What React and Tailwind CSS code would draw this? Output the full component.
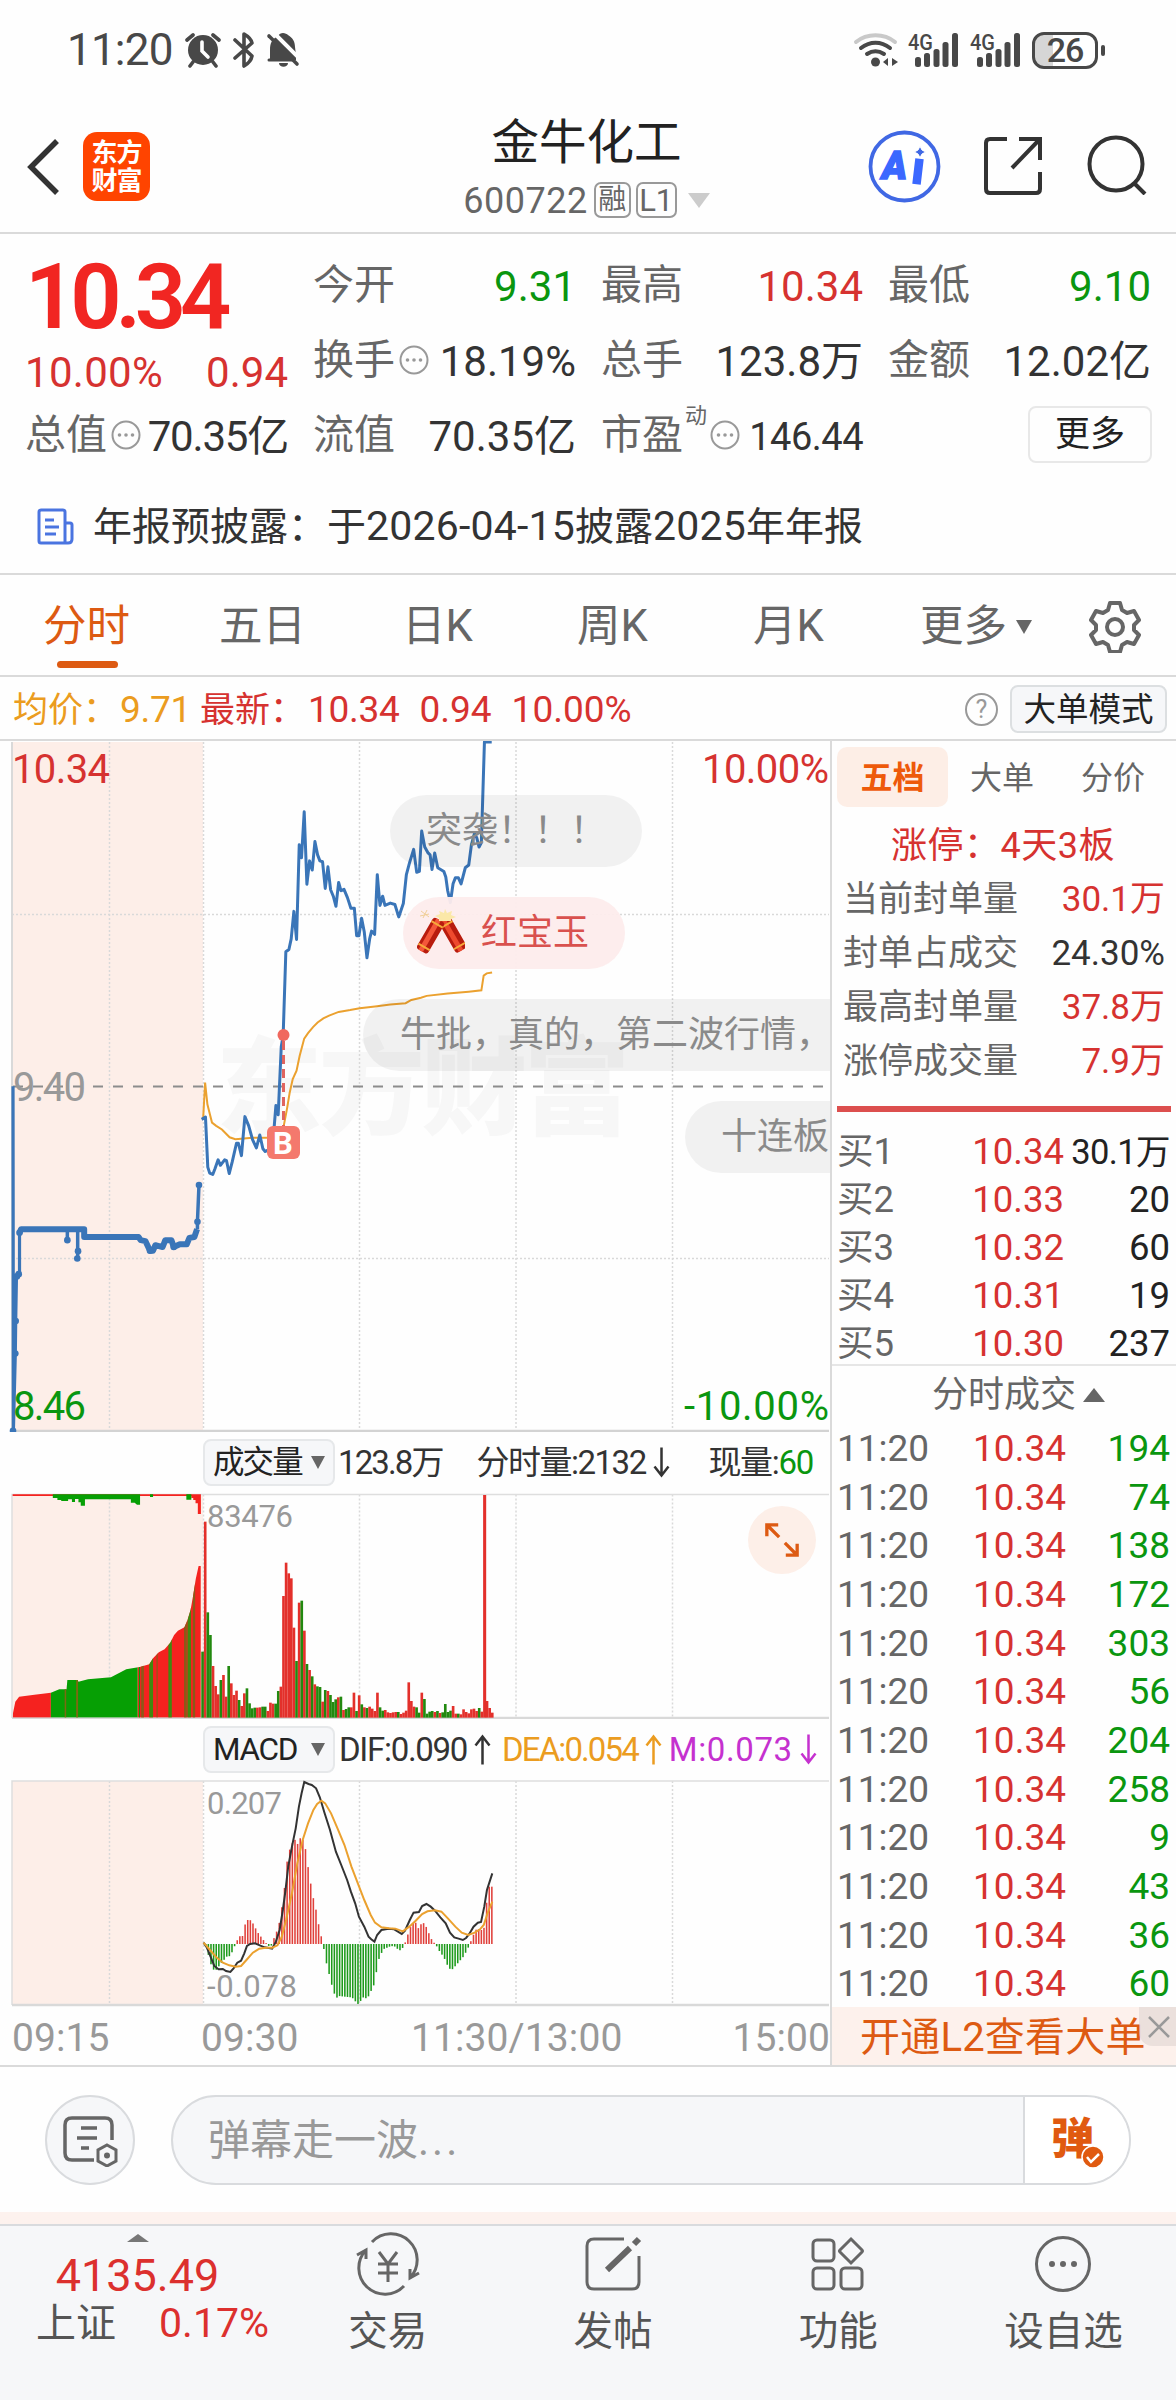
import clsx from "clsx";

const RED = "#f5221f";
const GREEN = "#069f04";

const priceLine =
    "527,848 537,843 543,952 548,965 556,968 562,955 570,936 576,948 587,936 592,938 599,966 607,940 618,900 623,900 631,927 640,842 650,862 660,892 670,910 679,882 687,912 693,918 700,915 709,925 715,880 721,818 727,838 735,690 740,665 747,483 755,478 761,455 768,395 775,456 782,250 788,278 795,178 802,336 809,285 816,305 823,243 830,272 836,285 843,287 850,345 857,298 864,348 871,362 878,384 885,332 891,350 899,347 908,365 917,388 926,388 932,448 938,448 945,410 952,440 959,496 966,455 971,438 979,445 986,315 993,382 1000,362 1006,382 1020,377 1032,380 1042,407 1054,378 1062,315 1070,290 1081,260 1089,310 1096,308 1102,220 1110,255 1118,267 1124,272 1129,304 1136,268 1144,300 1160,308 1165,320 1170,350 1177,376 1184,335 1190,322 1198,322 1205,335 1216,300 1225,294 1232,250 1240,225 1246,235 1252,255 1258,245 1266,26 1285,26";
const avgLine =
    "531,845 536,768 542,815 548,835 554,855 565,862 580,870 600,887 615,891 660,888 710,888 735,890 742,860 750,825 757,790 765,760 775,742 783,710 795,672 805,660 818,647 830,637 845,628 860,622 885,614 915,610 940,606 980,602 1020,598 1060,595 1075,588 1100,583 1115,579 1170,574 1225,570 1258,567 1264,535 1272,530 1286,528";
const auctionRise = "34,776 35,1526 40,1358 41,1287 43,1190 51,1185 51,1095";
const auctionLine =
    "51,1095 55,1087 220,1087 220,1104 362,1104 368,1111 380,1113 392,1134 400,1134 406,1122 425,1126 432,1111 448,1111 454,1126 470,1120 488,1120 495,1106 508,1104 515,1087";
const auctionDots = [
    [34, 1526], [40, 1358], [41, 1287], [44, 1190], [49, 1185], [51, 1095],
    [176, 1111], [204, 1135], [202, 1151], [392, 1134], [454, 1126], [516, 1071], [520, 991],
];

// one bar per minute from 09:30: top of the bar and its direction
const volume =
    "695g 305r 577g 645g 738r 798r 823r 780g 765r 830r 738g 790r 825r 812r 840g 858r 820r 805g 850g 865g 863g 863r 862r 860g 860g 873r 848r 851r 851g 813g 800r 528r 428r 460r 475r 623r 723g 548r 542g 632r 732g 750r 769g 793r 799g 801g 845r 810g 813r 825g 846g 838g 832r 830g 870r 867g 862g 862r 818r 873g 826r 853g 862r 864g 860r 866r 873r 818r 862g 872g 870r 877r 879r 877r 876r 876g 882r 878r 872r 787r 843r 860r 862g 878g 818r 837g 881g 875g 873g 876r 873g 879r 877g 852g 876g 872g 858r 881r 881g 883r 868r 876r 880r 868r 866r 873r 864g 875r 225r 843r 864r 878r"
        .split(" ")
        .map((v, i) => ({ x: 529 + i * 6.82, y: parseInt(v), up: v.endsWith("r") }));

const auctionVolume =
    "33,893 33,885 40,845 50,830 90,824 133,818 155,808 174,808 176,780 203,780 205,785 230,778 290,772 315,757 330,748 365,741 390,733 400,715 415,697 430,688 445,668 455,645 465,632 482,622 490,600 498,570 505,525 512,475 519,438 525,438 525,893";
const auctionColors = [
    [33, 133, RED], [133, 360, GREEN], [169, 173, "#7b6a12"], [199, 204, "#7b6a12"], [360, 525, RED],
    [363, 366, GREEN], [369, 376, "#8b5a18"], [390, 400, "#3f8a10"], [409, 412, "#8b5a18"], [440, 449, "#3f8a10"],
    [481, 488, "#8b5a18"], [490, 499, "#3f8a10"], [504, 510, "#8b5a18"],
];

const macdKeys = [
    [384, 710], [390, 740], [395, 770], [400, 782], [405, 778], [410, 765], [417, 752], [423, 740], [430, 738],
    [437, 712], [443, 690], [448, 678], [453, 678], [457, 645], [462, 630], [467, 630], [473, 642], [478, 658],
    [483, 672], [488, 682], [494, 695], [499, 703], [505, 714], [510, 690], [515, 670], [520, 650], [525, 603],
    [530, 552], [535, 462], [540, 422], [545, 402], [550, 385], [554, 415], [558, 380], [563, 390], [568, 390],
    [573, 452], [578, 498], [583, 555], [588, 580], [592, 622], [598, 668], [603, 702], [608, 752], [612, 775],
    [617, 812], [622, 840], [627, 866], [632, 858], [655, 862], [660, 866], [665, 878], [670, 884], [675, 866],
    [680, 860], [685, 868], [690, 852], [695, 835], [700, 818], [705, 755], [710, 738], [715, 718], [730, 708],
    [738, 710], [745, 722], [750, 718], [755, 704], [760, 680], [765, 655], [770, 640], [775, 635], [782, 658],
    [787, 638], [792, 640], [797, 655], [803, 680], [808, 695], [813, 702], [818, 718], [823, 730], [828, 740],
    [835, 765], [842, 782], [850, 768], [857, 755], [865, 740], [872, 720], [877, 702], [882, 680], [890, 655],
    [897, 660], [903, 660], [907, 595], [912, 530], [920, 530],
];
const macdBars = Array.from({ length: 110 }, (_, i) => {
    const x = 384 + i * 4.9;
    const k = Math.max(1, macdKeys.findIndex((p) => p[0] >= x));
    const [x0, y0] = macdKeys[k - 1];
    const [x1, y1] = macdKeys[k];
    return { x, y: y0 + ((y1 - y0) * (x - x0)) / (x1 - x0) };
});
const difLine =
    "380,698 386,712 393,740 400,768 408,778 416,777 422,783 430,786 436,775 443,758 450,752 456,730 461,708 467,702 476,700 485,706 494,712 502,714 508,716 515,695 522,660 528,600 533,540 538,470 545,410 552,355 558,290 563,250 568,216 576,222 582,225 590,235 597,262 606,310 616,360 627,425 637,465 648,510 655,545 663,580 670,620 680,650 688,680 693,688 699,695 704,675 712,660 725,656 736,658 750,672 756,662 765,630 772,608 782,606 788,588 796,582 804,590 812,602 822,622 832,640 840,668 848,682 856,686 864,690 870,684 876,672 884,650 892,638 898,636 904,590 909,540 919,490";
const deaLine =
    "380,698 392,720 404,742 416,758 428,766 440,770 450,768 460,750 472,728 484,716 496,713 508,713 518,706 526,680 534,630 545,550 555,460 565,390 575,340 585,300 592,282 600,272 607,280 618,310 630,355 643,405 656,470 668,520 680,570 692,615 700,638 712,652 726,655 738,656 752,664 764,650 776,632 788,612 798,604 812,601 824,605 836,625 850,650 862,668 874,675 886,668 896,658 903,645 910,610 919,575";

const limitStats = [
    ["当前封单量", "30.1万", true],
    ["封单占成交", "24.30%", false],
    ["最高封单量", "37.8万", true],
    ["涨停成交量", "7.9万", true],
];
const bids = [
    ["买1", "10.34", "30.1万"],
    ["买2", "10.33", "20"],
    ["买3", "10.32", "60"],
    ["买4", "10.31", "19"],
    ["买5", "10.30", "237"],
];
const trades = [194, 74, 138, 172, 303, 56, 204, 258, 9, 43, 36, 60];

function Signal() {
    return (
        <svg className="h-[36px] w-[52px] overflow-visible" viewBox="0 0 52 36" fill="#484848">
            <text x="0" y="18" fontSize="22" fontWeight="500" textLength="25" lengthAdjust="spacingAndGlyphs">4G</text>
            <rect x="7" y="25" width="6" height="10" rx="2.5" />
            <rect x="16" y="21" width="6" height="14" rx="2.5" />
            <rect x="25.500" y="17" width="6" height="18" rx="2.5" />
            <rect x="34.500" y="10" width="6" height="25" rx="2.5" />
            <rect x="44" y="1" width="6" height="34" rx="2.5" />
        </svg>
    );
}

function StatusBar() {
    return (
        <div className="flex h-[100px] items-center pl-[67px] pr-[71px] text-[#484848]">
            <span className="text-[44px] leading-none tracking-[-0.8px]">11:20</span>
            <svg className="ml-[12px] h-[36px] w-[36px]" viewBox="0 0 36 36" fill="none">
                <circle cx="18" cy="18" r="15" fill="#484848" />
                <path d="M2 8 8 3M34 8 28 3M8 30l-3 4M28 30l3 4" stroke="#484848" strokeWidth="3.6" strokeLinecap="round" />
                <path d="M17 10v9l6 6" stroke="#fff" strokeWidth="3.6" strokeLinecap="round" />
            </svg>
            <svg className="ml-[11px] h-[36px] w-[24px]" viewBox="0 0 24 36" fill="none" stroke="#484848" strokeWidth="3.600" strokeLinecap="round" strokeLinejoin="round">
                <path d="M3 8 20 24q-1 6-8 10V2q7 4 8 9L3 26" />
            </svg>
            <svg className="ml-[10px] h-[36px] w-[34px]" viewBox="0 0 34 36">
                <path d="M17 1c2 0 4 1 5 2 5 3 7 7 7 12l1 8v5H4V18c0-7 2-11 8-14 1-2 3-3 5-3ZM13 31h9c0 5-9 5-9 0Z" fill="#484848" />
                <path d="M6-1 36 29" stroke="#fff" strokeWidth="4" />
                <path d="M3 4 31 32" stroke="#484848" strokeWidth="3.600" strokeLinecap="round" />
                <path d="M3 28h23" stroke="#484848" strokeWidth="3" strokeLinecap="round" />
            </svg>
            <div className="ml-auto flex items-center">
                <svg className="h-[36px] w-[46px]" viewBox="0 0 46 36" fill="none" strokeLinecap="round">
                    <path d="M3 10c11-9 28-9 39 0" stroke="#c9c9c9" strokeWidth="4" />
                    <path d="M8 16c9-7 20-7 29 0" stroke="#484848" strokeWidth="4" />
                    <path d="M14 22c6-4 11-4 17 0" stroke="#484848" strokeWidth="4" />
                    <circle cx="22.500" cy="30" r="4.500" fill="#484848" />
                    <path d="M35 26v8l-5-4ZM39 26v8l6-4Z" fill="#484848" />
                </svg>
                <div className="ml-[9px] flex gap-[10px]">
                    <Signal />
                    <Signal />
                </div>
                <div className="ml-[10px] flex h-[37px] w-[66px] items-center justify-center rounded-[12px] border-[3px] border-[#484848] bg-linear-to-r from-[#d6d6d6] from-[30%] to-white to-[30%]">
                    <span className="text-[34px] font-medium leading-none tracking-[-1px]">26</span>
                </div>
                <div className="ml-[3px] h-[11px] w-[4px] rounded bg-[#484848]" />
            </div>
        </div>
    );
}

function Header() {
    return (
        <header className="flex h-[134px] justify-between border-b-2 border-[#dadada]">
            <div className="flex w-[380px] items-start pl-[25px] pt-[32px]">
                <svg className="mt-[7px] h-[56px] w-[34px]" viewBox="0 0 34 56" fill="none" stroke="#333" strokeWidth="5.500">
                    <path d="M32 2 6 28l26 26" />
                </svg>
                <div className="ml-[24px] flex h-[69px] w-[67px] flex-col items-center justify-center rounded-[14px] bg-[#ff4400] text-[26px] font-bold leading-[28px] tracking-[-1px] text-white">
                    <span>东方</span>
                    <span>财富</span>
                </div>
            </div>
            <div className="-ml-[3px] flex flex-col items-center pt-[17px]">
                <h1 className="text-[47.500px] leading-[52px] text-[#222]">金牛化工</h1>
                <div className="mt-[12px] flex h-[38px] items-center text-[#666]">
                    <span className="mt-[2px] text-[36px] leading-none tracking-[0.500px]">600722</span>
                    <span className="ml-[6px] flex h-[36px] w-[37px] items-center justify-center rounded-[7px] border-2 border-[#999] text-[28px] leading-none">融</span>
                    <span className="ml-[5px] flex h-[36px] w-[41px] items-center justify-center rounded-[7px] border-2 border-[#999] text-[31px] leading-none">L1</span>
                    <svg className="ml-[11px] h-[15px] w-[22px]" viewBox="0 0 22 15" fill="#ccc">
                        <path d="M0 0h22L11 15Z" />
                    </svg>
                </div>
            </div>
            <div className="flex w-[380px] justify-end pr-[29px] pt-[30px]">
                <svg className="h-[73px] w-[73px]" viewBox="0 0 73 73">
                    <circle cx="36.500" cy="36.500" r="34" fill="#fff" stroke="#4068e4" strokeWidth="3.800" />
                    <g fontStyle="italic">
                        <text x="14" y="49" fontSize="38" fontWeight="900" fill="#3b68ff" stroke="#3b68ff" strokeWidth="1.500">A</text>
                    </g>
                    <path d="m51 33-2 17" stroke="#3b68ff" strokeWidth="8.500" strokeLinecap="square" />
                    <path d="M52 16q1 5 6 6-5 1-6 6-1-5-6-6 5-1 6-6Z" fill="#4068e4" stroke="#fff" strokeWidth="1" />
                </svg>
                <svg className="ml-[42px] mt-[6px] h-[60px] w-[60px]" viewBox="0 0 60 60" fill="none" stroke="#333" strokeWidth="4">
                    <path d="M24 3H7q-4 0-4 4v46q0 4 4 4h46q4 0 4-4V36M36 3h21v21M56 4 29 32" />
                </svg>
                <svg className="ml-[44px] mt-[5px] h-[60px] w-[60px]" viewBox="0 0 60 60" fill="none" stroke="#333" strokeWidth="4">
                    <circle cx="29" cy="29" r="26.500" />
                    <path d="m47 48 11 11" />
                </svg>
            </div>
        </header>
    );
}

function Info() {
    return (
        <svg className="ml-[4px] h-[30px] w-[30px] shrink-0" viewBox="0 0 30 30" fill="#999">
            <circle cx="15" cy="15" r="13.500" fill="none" stroke="#999" strokeWidth="2" />
            <circle cx="8.500" cy="15" r="1.800" />
            <circle cx="15" cy="15" r="1.800" />
            <circle cx="21.500" cy="15" r="1.800" />
        </svg>
    );
}

function Stat({ label, value, info, sup, className = "text-[#333]", size = "text-[42px]" }) {
    return (
        <div className="flex h-[75px] items-center justify-between whitespace-nowrap pt-[1px] leading-none">
            <span className="flex items-center text-[41px] text-[#666]">
                {label}
                {sup && <sup className="-mr-[1px] ml-[2px] self-start text-[22px] leading-[18px] top-[-8px]">{sup}</sup>}
                {info && <Info />}
            </span>
            <span className={clsx("mt-[3px]", size, className)}>{value}</span>
        </div>
    );
}

function Quote() {
    return (
        <section className="grid grid-cols-[263px_263px_262px_263px] gap-x-[25px] pl-[25px] pt-[13px]">
            <div>
                <div className="flex h-[91px] items-center pt-[11px] text-[90px] font-semibold leading-none tracking-[-6.200px] text-[#f12622]">10.34</div>
                <div className="flex h-[59px] items-center justify-between pt-[10px] text-[42px] leading-none text-[#d63230]">
                    <span className="tracking-[0.300px]">10.00%</span>
                    <span>0.94</span>
                </div>
                <Stat label="总值" info value="70.35亿" size="text-[42px] tracking-[-1.200px]" />
            </div>
            <div>
                <Stat label="今开" value="9.31" className="text-[#0a960f]" />
                <Stat label="换手" info value="18.19%" />
                <Stat label="流值" value="70.35亿" />
            </div>
            <div>
                <Stat label="最高" value="10.34" className="text-[#d63230]" />
                <Stat label="总手" value="123.8万" />
                <Stat label="市盈" sup="动" info value="146.44" size="text-[38px] tracking-[-0.500px]" />
            </div>
            <div>
                <Stat label="最低" value="9.10" className="text-[#0a960f]" />
                <Stat label="金额" value="12.02亿" />
                <div className="-mr-[1px] flex h-[75px] items-center justify-end">
                    <button className="h-[57px] w-[124px] rounded-[8px] border-2 border-[#e8e8e8] text-[35px] leading-none text-[#222]">更多</button>
                </div>
            </div>
        </section>
    );
}

function Notice() {
    return (
        <div className="flex h-[103px] items-center border-b-2 border-[#dadada] pl-[37px] pt-[8px]">
            <svg className="h-[37px] w-[37px]" viewBox="0 0 37 37" fill="none" stroke="#4a74e0" strokeWidth="3">
                <path d="M28 35H4q-2 0-2-2V4q0-2 2-2h22q2 0 2 2Zm0-20h5q2 0 2 2v14q0 4-4 4h-3" />
                <path d="M8 12h9M8 19h14M8 26h11" />
            </svg>
            <span className="ml-[19px] text-[39px] leading-none text-[#333]">
                年报预披露：于<span className="text-[41px] tracking-[0.200px]">2026-04-15</span>披露<span className="text-[41px] tracking-[0.200px]">2025</span>年年报
            </span>
        </div>
    );
}

function Tabs() {
    return (
        <nav className="flex h-[102px] items-center border-b-2 border-[#dadada] pl-[43px] pt-[3px] text-[43.500px] leading-none text-[#666]">
            <div className="relative w-[176px] text-[#dd5a12]">
                分时
                <span className="absolute -bottom-[20px] left-[14px] h-[7px] w-[61px] rounded-full bg-[#dd5a12]" />
            </div>
            <div className="w-[183px]">五日</div>
            <div className="w-[175px]">日K</div>
            <div className="w-[176px]">周K</div>
            <div className="w-[167px]">月K</div>
            <div className="flex items-center">
                更多
                <svg className="ml-[9px] h-[14px] w-[16px]" viewBox="0 0 16 14" fill="#666">
                    <path d="M0 0h16L8 14Z" />
                </svg>
            </div>
            <svg className="ml-[57px] h-[52px] w-[52px]" viewBox="0 0 52 52" fill="none" stroke="#666" strokeWidth="4" strokeLinejoin="round">
                <path d="M21 2h10l2 7 5 3 7-2 5 9-5 5v5l5 5-5 9-7-2-5 3-2 7H21l-2-7-5-3-7 2-5-9 5-5v-5l-5-5 5-9 7 2 5-3Z" />
                <circle cx="26" cy="26" r="8" />
            </svg>
        </nav>
    );
}

function PriceBar() {
    return (
        <div className="flex h-[64px] items-center whitespace-nowrap border-b-2 border-[#dadada] pl-[13px] pr-[9px] pt-[2px] text-[35px] leading-none text-[#d63230]">
            <span className="w-[187px] text-[#eb9c20]">均价：<span className="ml-[2px] text-[37px] tracking-[-0.300px]">9.71</span></span>
            <span>最新：<span className="ml-[3px] text-[37px] tracking-[-0.300px]">10.34</span></span>
            <span className="ml-[20px] text-[37px]">0.94</span>
            <span className="ml-[20px] text-[37px]">10.00%</span>
            <span className="ml-auto flex h-[33px] w-[33px] items-center justify-center rounded-full border-2 border-[#999] text-[25px] text-[#999]">?</span>
            <span className="ml-[12px] flex h-[48px] w-[157px] items-center justify-center rounded-[8px] border-2 border-[#dcdfe1] bg-[#f6f7f9] pt-[2px] text-[32.500px] text-[#222]">大单模式</span>
        </div>
    );
}

function Pill({ children, className }) {
    return (
        <div className={clsx("absolute flex h-[72px] items-center whitespace-nowrap text-[36px] leading-none", className)}>
            {children}
        </div>
    );
}

function Firecracker() {
    return (
        <svg className="h-[50px] w-[48px]" viewBox="0 0 48 50">
            <g transform="rotate(-30 28 14)">
                <rect x="22" y="12" width="13" height="35" rx="3" fill="#b81c0e" />
                <rect x="25" y="12" width="5" height="35" fill="#ee4a2e" />
                <path d="M22 17h13M22 42h13" stroke="#f6a93a" strokeWidth="2" />
            </g>
            <g transform="rotate(30 22 14)">
                <rect x="15" y="12" width="13" height="36" rx="3" fill="#b81c0e" />
                <rect x="18" y="12" width="5" height="36" fill="#f4573a" />
                <path d="M15 17h13M15 43h13" stroke="#f6a93a" strokeWidth="2" />
            </g>
            <path d="m28 1 2 4 5-2-1 4 5 2-5 2 0 2-12 0 0-3-4-2 5-2-1-3 5 2Z" fill="#fbe8a8" />
            <path d="m4 3 8 6M10 2 6 10M3 8l9-2" stroke="#f0cf98" strokeWidth="1" />
        </svg>
    );
}

function PriceChart() {
    return (
        <div className="relative h-[691px] overflow-hidden">
            <svg className="h-[691px] w-[830px]" viewBox="0 741 830 691">
                <rect x="12" y="742" width="191" height="689" fill="#fdeee8" />
                <text x="216" y="1126" fontSize="106" fontWeight="900" fill="#f7f7f7" textLength="414">东方财富</text>
                <g stroke="#d9d9d9" strokeWidth="1.500" strokeDasharray="2 2">
                    <path d="M109.500 742v689M203.500 742v689M359.500 742v689M516 742v689M672.500 742v689M12 914.500h817M12 1258.500h817" />
                </g>
                <path d="M12 742v689" stroke="#d9d9d9" strokeWidth="2" />
                <path d="M12 1431h817" stroke="#d3d3d3" strokeWidth="2.500" />
                <path d="M13 1086.500h816" stroke="#8c8c8c" strokeWidth="2" strokeDasharray="10 10" />
                <g transform="translate(0 730) scale(.38265 .45918)" fill="none">
                    <polyline points={avgLine} stroke="#eba12f" strokeWidth="2" vectorEffect="non-scaling-stroke" />
                    <g stroke="#3a75b8" strokeLinejoin="round">
                        <polyline points={priceLine} strokeWidth="3" vectorEffect="non-scaling-stroke" />
                        <polyline points={auctionRise} strokeWidth="3.200" vectorEffect="non-scaling-stroke" />
                        <polyline points={auctionLine} strokeWidth="6" vectorEffect="non-scaling-stroke" />
                        <path d="M176 1087v24M203 1087v64M516 1087v-16l4-80" strokeWidth="3.500" vectorEffect="non-scaling-stroke" />
                    </g>
                </g>
                {auctionDots.map(([x, y]) => (
                    <circle key={`${x}-${y}`} cx={x * 0.38265} cy={730 + y * 0.45918} r="3.300" fill="#3a75b8" />
                ))}
                <path d="M283.500 1041v85" stroke="#e0645f" strokeWidth="3" strokeDasharray="9 5" />
                <circle cx="283.500" cy="1035" r="6" fill="#f0685e" />
                <rect x="267" y="1126" width="33" height="33" rx="6" fill="#f4796d" />
                <text x="273" y="1154" fontSize="31" fontWeight="700" fill="#fff">B</text>
                <g fontSize="40">
                    <text x="12" y="783" fill="#d63230" textLength="98">10.34</text>
                    <text x="13" y="1101" fill="#999" textLength="73">9.40</text>
                    <text x="13" y="1420" fill="#0a960f" textLength="73">8.46</text>
                    <text x="829" y="783" fill="#d63230" textAnchor="end" textLength="127">10.00%</text>
                    <text x="829" y="1420" fill="#0a960f" textAnchor="end" textLength="145">-10.00%</text>
                </g>
            </svg>
            <Pill className="left-[390px] top-[54px] w-[252px] rounded-full bg-black/5 pl-[36px] text-[#8a8a8a]">突袭！！！</Pill>
            <Pill className="left-[403px] top-[156px] w-[222px] rounded-full bg-[#fdecec]/95 pl-[14px] text-[#d9514e]">
                <Firecracker />
                <span className="ml-[16px]">红宝玉</span>
            </Pill>
            <Pill className="left-[363px] top-[258px] w-[467px] rounded-l-full bg-black/5 pl-[37px] text-[#8a8a8a]">牛批，真的，第二波行情，</Pill>
            <Pill className="left-[685px] top-[360px] w-[145px] rounded-l-full bg-black/5 pl-[36px] text-[#8a8a8a]">十连板</Pill>
        </div>
    );
}

function IndicatorSelect({ children }) {
    return (
        <div className="flex h-[47px] w-[132px] shrink-0 items-center justify-between rounded-[8px] border-2 border-[#e6e8ea] bg-[#f6f7f9] pl-[8px] pr-[8px] text-[31.500px] leading-none text-[#222]">
            {children}
            <svg className="h-[13px] w-[14px]" viewBox="0 0 14 13" fill="#666">
                <path d="M0 0h14L7 13Z" />
            </svg>
        </div>
    );
}

function Arrow({ up }) {
    return (
        <svg className={clsx("ml-[7px] h-[31px] w-[17px]", !up && "rotate-180")} viewBox="0 0 17 30" fill="none" stroke="currentColor" strokeWidth="2.500">
            <path d="M8.500 30V2M1.500 11l7-9 7 9" />
        </svg>
    );
}

function Grid({ top, bottom }) {
    const h = bottom - top;
    return (
        <>
            <rect x="12" y={top} width="191" height={h} fill="#fdeee8" />
            {[109.5, 203.5, 359.5, 516, 672.5].map((x) => (
                <path key={x} d={`M${x} ${top}v${h}`} stroke="#d9d9d9" strokeWidth="1.500" strokeDasharray="2 2" />
            ))}
            <path d={`M12 ${bottom}V${top}H829`} fill="none" stroke="#dedede" strokeWidth="1.500" />
            <path d={`M12 ${bottom}H829`} stroke="#d9d9d9" strokeWidth="2.500" />
        </>
    );
}

function VolumeChart() {
    return (
        <>
            <div className="flex h-[61px] items-center whitespace-nowrap pl-[203px] text-[33px] leading-none tracking-[-1.900px] text-[#333]">
                <IndicatorSelect>成交量</IndicatorSelect>
                <span className="ml-[3px]">123.8万</span>
                <span className="ml-[34px] flex items-center tracking-[-1.500px]">分时量:2132<Arrow /></span>
                <span className="ml-auto mr-[17px] tracking-[-1.300px]">现量:<span className="text-[#0a960f]">60</span></span>
            </div>
            <div className="relative h-[226px]">
                <svg className="h-[226px] w-[830px]" viewBox="0 1493 830 226">
                    <Grid top={1494.5} bottom={1718} />
                    <g transform="translate(0 1420) scale(.38265 .33333)">
                        <clipPath id="auction">
                            <polygon points={auctionVolume} />
                        </clipPath>
                        <g clipPath="url(#auction)">
                            {auctionColors.map(([a, b, color]) => (
                                <rect key={a} x={a} y="400" width={b - a} height="493" fill={color} />
                            ))}
                        </g>
                        <path d="M33 223H525V282H517V250H511V240H505V234H500V228H33Z" fill={RED} />
                        <path d="M138 223H366V254H358L352 248H342V238H222V257H211V247H205V237H196V246H188V238H178V243H160V240H150V234H138ZM487 223h13v16h-13ZM392 223h8v8h-8Z" fill={GREEN} />
                        {volume.map((v) => (
                            <rect key={v.x} x={v.x - 3} y={v.y} width={v.x > 1260 && v.x < 1268 ? 8 : 6.9} height={893 - v.y} fill={v.up ? "#e3302b" : "#22890f"} />
                        ))}
                    </g>
                    <text x="207" y="1527" fontSize="31" fill="#999" textLength="86">83476</text>
                </svg>
                <div className="absolute left-[748px] top-[13px] flex h-[68px] w-[68px] items-center justify-center rounded-full bg-[#fdefe8]">
                    <svg className="h-[36px] w-[36px]" viewBox="0 0 38 38" fill="none" stroke="#dd5a12" strokeWidth="3.500">
                        <path d="M3 15V3h12M4 4l12 12M35 23v12H23M34 34 22 22" />
                    </svg>
                </div>
            </div>
        </>
    );
}

function MacdChart() {
    return (
        <>
            <div className="flex h-[61px] items-center whitespace-nowrap pl-[203px] text-[33px] leading-none tracking-[-1.300px] text-[#333]">
                <IndicatorSelect>MACD</IndicatorSelect>
                <span className="ml-[4px] flex items-center">DIF:0.090<Arrow up /></span>
                <span className="ml-[11px] flex items-center tracking-[-1.900px] text-[#eb9c20]">DEA:0.054<Arrow up /></span>
                <span className="ml-[7px] flex items-center tracking-[0.600px] text-[#c531cf]">M:0.073<Arrow /></span>
            </div>
            <svg className="h-[227px] w-[830px]" viewBox="0 1780 830 227">
                <Grid top={1781} bottom={2005} />
                <g transform="translate(0 1710) scale(.5357 .33333)">
                    {macdBars.map(({ x, y }) => (
                        <rect key={x} x={x - 1.4} y={Math.min(y, 702)} width="2.900" height={Math.abs(702 - y)} fill={y < 702 ? "#e0403b" : "#1d9a1b"} />
                    ))}
                    <polyline points={difLine} fill="none" stroke="#333" strokeWidth="2" vectorEffect="non-scaling-stroke" />
                    <polyline points={deaLine} fill="none" stroke="#eba12f" strokeWidth="2" vectorEffect="non-scaling-stroke" />
                </g>
                <text x="207" y="1814" fontSize="31" fill="#999" textLength="75">0.207</text>
                <text x="207" y="1997" fontSize="31" fill="#999" textLength="90">-0.078</text>
            </svg>
            <div className="flex h-[59px] items-center pl-[12px] pt-[3px] text-[39px] leading-none tracking-[0.100px] text-[#999]">
                <span className="w-[189px]">09:15</span>
                <span className="w-[210px]">09:30</span>
                <span>11:30/13:00</span>
                <span className="ml-auto">15:00</span>
            </div>
        </>
    );
}

function OrderBook() {
    return (
        <aside className="flex w-[346px] flex-col border-l-2 border-[#dadada] text-[#666]">
            <div className="flex h-[71px] items-center pl-[5px] text-[32px] leading-none">
                <span className="flex h-[60px] w-[111px] items-center justify-center rounded-[10px] bg-[#fdeee6] pt-[2px] font-bold text-[#ee5a0a]">五档</span>
                <span className="ml-[22px] pt-[2px]">大单</span>
                <span className="ml-[47px] pt-[2px]">分价</span>
            </div>
            <div className="h-[60px] pr-[2px] pt-[16px] text-center text-[36px] leading-none tracking-[0.500px] text-[#d63230]">涨停：4天3板</div>
            {limitStats.map(([label, value, red]) => (
                <div key={label} className="flex h-[54px] items-center justify-between pl-[11px] pr-[11px] text-[35px] leading-none">
                    <span>{label}</span>
                    <span className={red ? "text-[#d63230]" : "text-[#333]"}>{value}</span>
                </div>
            ))}
            <div className="mx-[5px] mb-[16px] mt-[18px] h-[6px] bg-[#dc4f4e]" />
            {bids.map(([label, price, qty]) => (
                <div key={label} className="flex h-[48px] items-center whitespace-nowrap pl-[5px] pr-[6px] text-[36.500px] leading-none">
                    <span className="w-[92px] shrink-0">{label}</span>
                    <span className="w-[135px] shrink-0 text-right text-[#d63230]">{price}</span>
                    <span className={clsx("ml-auto text-[#222]", qty.endsWith("万") && "text-[34.500px] tracking-[-0.600px]")}>{qty}</span>
                </div>
            ))}
            <div className="-mt-[4px] flex h-[59px] items-center justify-center border-t-2 border-[#e6e6e6] pl-[29px] text-[36px] leading-none">
                分时成交
                <svg className="ml-[7px] h-[14px] w-[22px]" viewBox="0 0 22 14" fill="#666">
                    <path d="M0 14h22L11 0Z" />
                </svg>
            </div>
            {trades.map((qty, i) => (
                <div key={i} className="flex h-[48.700px] items-center pl-[5px] pr-[6px] pt-[2px] text-[37px] leading-none">
                    <span className="w-[93px]">11:20</span>
                    <span className="w-[136px] text-right text-[#d63230]">10.34</span>
                    <span className="flex-1 text-right text-[#0a960f]">{qty}</span>
                </div>
            ))}
            <div className="relative flex flex-1 items-center bg-[#fdf1ec] pl-[28px] pt-[4px] text-[40px] leading-none tracking-[0.200px] text-[#dd5a12]">
                开通L2查看大单
                <span className="absolute right-[-2px] top-0 flex h-[39px] w-[39px] items-center justify-center rounded-bl-[14px] bg-[#d9d0cc]/50">
                    <svg className="h-[22px] w-[22px]" viewBox="0 0 22 22" stroke="#999" strokeWidth="2.500">
                        <path d="m1 1 20 20M21 1 1 21" />
                    </svg>
                </span>
            </div>
        </aside>
    );
}

function CommentBar() {
    return (
        <div className="flex h-[145px] items-center pl-[45px]">
            <div className="flex h-[90px] w-[90px] items-center justify-center rounded-full border-2 border-[#d9dbde] bg-[#f6f7f9]">
                <svg className="h-[54px] w-[58px]" viewBox="0 0 58 54" fill="none" stroke="#666" strokeWidth="3.500">
                    <path d="M33 47H11q-7 0-7-7V12q0-7 7-7h33q7 0 7 7v15" />
                    <path d="M20 15h16M16 25h20M20 35h8" />
                    <path d="m46 32 9 5v11l-9 5-9-5V37Z" strokeWidth="3" />
                    <circle cx="46" cy="42.500" r="3" fill="#666" stroke="none" />
                </svg>
            </div>
            <div className="ml-[36px] flex h-[90px] w-[960px] overflow-hidden rounded-full border-2 border-[#d9dbde] bg-[#f6f7f9]">
                <span className="flex flex-1 items-center pl-[35px] pt-[3px] text-[42px] leading-none text-[#999]">
                    弹幕走一波<span className="tracking-[3px]">...</span>
                </span>
                <span className="relative flex w-[106px] items-center border-l-2 border-[#d9dbde] bg-white pl-[26px] text-[43px] font-black leading-none text-[#e05a10]">
                    弹
                    <svg className="absolute left-[56px] top-[48px] h-[24px] w-[24px]" viewBox="0 0 24 24">
                        <circle cx="12" cy="12" r="11" fill="#e05a10" stroke="#fff" strokeWidth="1.500" />
                        <path d="m6 12 4 5 8-8" fill="none" stroke="#fff" strokeWidth="2.500" />
                    </svg>
                </span>
            </div>
        </div>
    );
}

function NavItem({ label, children }) {
    return (
        <div className="flex flex-1 flex-col items-center pt-[9px]">
            <svg className="h-[58px] w-[66px] overflow-visible" viewBox="0 0 66 58" fill="none" stroke="#666" strokeWidth="3">
                {children}
            </svg>
            <span className="mt-[19px] text-[39.500px] leading-none">{label}</span>
        </div>
    );
}

function BottomNav() {
    return (
        <div className="flex h-[177px] border-t-2 border-[#d9dbde] bg-[#f6f7f9] text-[#555]">
            <div className="flex w-[275px] flex-col items-center pt-[8px]">
                <svg className="h-[8px] w-[22px]" viewBox="0 0 22 8" fill="#777">
                    <path d="M0 8h22L11 0Z" />
                </svg>
                <span className="mt-[11px] text-[45px] leading-none text-[#dc302e]">4135.49</span>
                <div className="ml-[36px] mt-[5px] flex w-[233px] items-center justify-between self-start text-[40px] leading-none">
                    <span>上证</span>
                    <span className="text-[41px] text-[#dc302e]">0.17%</span>
                </div>
            </div>
            <NavItem label="交易">
                <path d="M17 7a26 26 0 0 1 38 36M49 51A26 26 0 0 1 11 15M2 20l9-5v9M64 38l-9 5v-9" />
                <path d="m24 17 9 12 9-12M33 29v18M23 29h20M23 38h20" />
            </NavItem>
            <NavItem label="发帖">
                <path d="M44 4H14q-7 0-7 7v36q0 7 7 7h38q7 0 7-7V21" />
                <path d="M27 35 50 13M54 9l5-5" strokeWidth="6" />
            </NavItem>
            <NavItem label="功能">
                <rect x="8" y="5" width="21" height="21" rx="4" />
                <rect x="8" y="33" width="21" height="21" rx="4" />
                <rect x="36" y="33" width="21" height="21" rx="4" />
                <path d="m46 4 11 11q1 1 0 2L46 28 35 17q-1-1 0-2Z" />
            </NavItem>
            <NavItem label="设自选">
                <circle cx="33" cy="29" r="26.500" />
                <g fill="#666" stroke="none">
                    <circle cx="22" cy="29" r="3" />
                    <circle cx="33" cy="29" r="3" />
                    <circle cx="44" cy="29" r="3" />
                </g>
            </NavItem>
        </div>
    );
}

export default function App() {
    return (
        <div className="h-[2400px] w-[1176px] overflow-hidden bg-[#fefefe] font-[Roboto,'Noto_Sans_CJK_SC',sans-serif]">
            <StatusBar />
            <Header />
            <Quote />
            <Notice />
            <Tabs />
            <PriceBar />
            <div className="flex h-[1326px] border-b-2 border-[#dadada]">
                <main className="w-[830px]">
                    <PriceChart />
                    <VolumeChart />
                    <MacdChart />
                </main>
                <OrderBook />
            </div>
            <CommentBar />
            <div className="h-[12px] bg-[#fdf2ee]" />
            <BottomNav />
        </div>
    );
}
